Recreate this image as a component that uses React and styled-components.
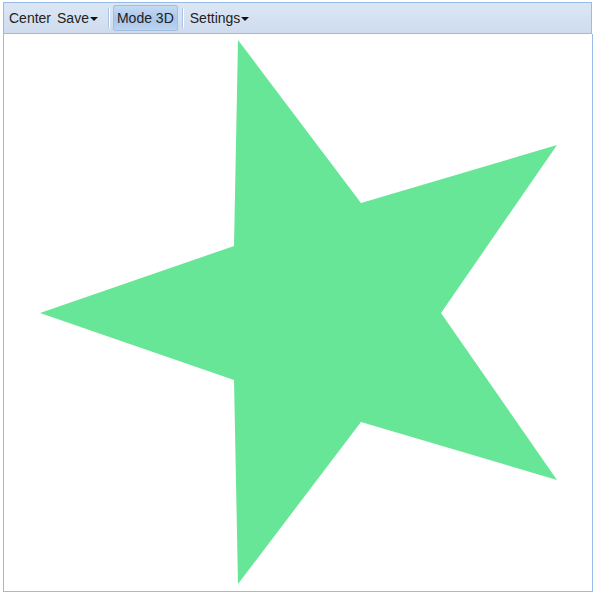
import React from "react";
import styled, { createGlobalStyle } from "styled-components";

const Global = createGlobalStyle`
  body {
    margin: 0;
    background: #ffffff;
    font-family: "Liberation Sans", Arial, sans-serif;
  }
`;

const Panel = styled.div`
  box-sizing: border-box;
  margin: 2px 0 0 3px;
  width: 590px;
  height: 590px;
  display: flex;
  flex-direction: column;
`;

const Toolbar = styled.div`
  box-sizing: border-box;
  height: 32px;
  width: 589px;
  display: flex;
  align-items: center;
  padding: 0 2px;
  border: 1px solid #99bbe8;
  background: linear-gradient(#dce7f5, #cfdcee);
`;

const Button = styled.div`
  box-sizing: border-box;
  height: 26px;
  display: flex;
  align-items: center;
  padding: 0 ${(p) => (p.pressed ? "3px" : "2px")};
  font-size: 14px;
  color: #222;
  border: 1px solid ${(p) => (p.pressed ? "#a3bede" : "transparent")};
  border-radius: 2px;
  background: ${(p) =>
    p.pressed ? "linear-gradient(#c6daf2, #a9c6ec 55%, #bcd4f1)" : "transparent"};
`;

const Arrow = styled.span`
  display: inline-block;
  width: 0;
  height: 0;
  margin: 2px 3px 0 1px;
  border-left: 4px solid transparent;
  border-right: 4px solid transparent;
  border-top: 4px solid #111;
`;

const Sep = styled.div`
  width: 1px;
  height: 20px;
  margin: 0 4px;
  background: #aac3e6;
  box-shadow: 1px 0 0 #ffffff;
`;

const Canvas = styled.div`
  box-sizing: border-box;
  flex: 1;
  border: 1px solid #99bbe8;
  border-top: none;
  background: #ffffff;
  overflow: hidden;
`;

const Star = () => (
  <svg width="588" height="558" viewBox="4 34 588 558">
    <polygon
      fill="#68e697"
      points="238,40 361,203 557,145 441,313 557,480 361,422 238,584 234,380 40,313 234,246"
    />
  </svg>
);

export default function App() {
  return (
    <>
      <Global />
      <Panel>
        <Toolbar>
          <Button>Center</Button>
          <Button>
            Save
            <Arrow />
          </Button>
          <Sep />
          <Button pressed>Mode 3D</Button>
          <Sep />
          <Button>
            Settings
            <Arrow />
          </Button>
        </Toolbar>
        <Canvas>
          <Star />
        </Canvas>
      </Panel>
    </>
  );
}
